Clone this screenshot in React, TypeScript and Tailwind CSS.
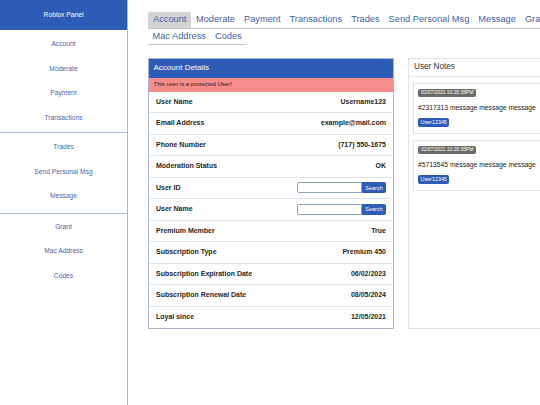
import * as React from "react";

const groups: string[][] = [
  ["Account", "Moderate", "Payment", "Transactions"],
  ["Trades", "Send Personal Msg", "Message"],
  ["Grant", "Mac Address", "Codes"],
];

const tabs = [
  "Account",
  "Moderate",
  "Payment",
  "Transactions",
  "Trades",
  "Send Personal Msg",
  "Message",
  "Grant",
  "Mac Address",
  "Codes",
];

const rows: { label: string; value?: string; search?: boolean }[] = [
  { label: "User Name", value: "Username123" },
  { label: "Email Address", value: "example@mail.com" },
  { label: "Phone Number", value: "(717) 550-1675" },
  { label: "Moderation Status", value: "OK" },
  { label: "User ID", search: true },
  { label: "User Name", search: true },
  { label: "Premium Member", value: "True" },
  { label: "Subscription Type", value: "Premium 450" },
  { label: "Subscription Expiration Date", value: "06/02/2023" },
  { label: "Subscription Renewal Date", value: "08/05/2024" },
  { label: "Loyal since", value: "12/05/2021" },
];

const notes = [
  { date: "02/07/2021 10:20:35PM", text: "#2317313 message message message", user: "User12345" },
  { date: "02/07/2021 10:20:35PM", text: "#5713545 message message message", user: "User12345" },
];

export default function App() {
  return (
    <div className="flex h-[405px] w-[540px] overflow-hidden bg-white font-['Liberation_Sans',Arial,sans-serif]">
      {/* sidebar */}
      <aside className="flex h-full w-[128px] shrink-0 flex-col border-r border-[#a9b8d2] bg-white">
        <div className="flex h-[30px] items-center justify-center bg-[#2e5bb6] text-[6.7px] text-white">
          Roblox Panel
        </div>
        {groups.map((g, i) => (
          <div
            key={i}
            className={
              i === 0
                ? "border-b border-[#a9b8d2] py-[2px]"
                : i === 1
                ? "border-b border-[#a9b8d2] pt-[2px] pb-[4px]"
                : "pt-[1px]"
            }
          >
            {g.map((item) => (
              <div key={item} className="flex h-[24.5px] items-center justify-center text-[6.7px] text-[#4a66ab]">
                {item}
              </div>
            ))}
          </div>
        ))}
      </aside>

      {/* main */}
      <main className="shrink-0 pl-[20px] pt-[12px]">
        <nav className="flex w-[420px] flex-wrap">
          {tabs.map((t, i) => (
            <div
              key={t}
              className={
                i === 0
                  ? "rounded-t-[2px] border-b border-[#c9c9c9] bg-[#d3d3d3] px-[5px] py-[2px] text-[9.25px] leading-[11.5px] text-[#3f5fa6]"
                  : "border-b border-[#c9c9c9] px-[4.5px] py-[2px] text-[9.25px] leading-[11px] text-[#3f5fa6]"
              }
            >
              {t}
            </div>
          ))}
        </nav>

        <div className="mt-[13px] grid grid-cols-[246px_246px] items-start gap-[14px]">
          {/* account details */}
          <section className="border border-[#a9b6cd] bg-white">
            <div className="flex h-[19px] items-center bg-[#2e5bb6] px-[4.5px] text-[8px] text-white">
              Account Details
            </div>
            <div className="flex h-[14px] items-center bg-[#f68d8d] px-[4.5px] text-[6px] text-[#2a1a1a]">
              This user is a protected User!
            </div>
            {rows.map((r, i) => (
              <div
                key={i}
                className={
                  i === rows.length - 1
                    ? "flex h-[21.5px] items-center justify-between px-[7px] text-[7px] font-bold text-[#1f1f1f]"
                    : "flex h-[21.5px] items-center justify-between border-b border-[#dfe5ee] px-[7px] text-[7px] font-bold text-[#1f1f1f]"
                }
              >
                <span>{r.label}</span>
                {r.search ? (
                  <div className="flex h-[11px]">
                    <div className="w-[65px] rounded-l-[2px] border border-[#8ea2c8] bg-white" />
                    <div className="flex w-[24px] items-center justify-center rounded-r-[2px] bg-[#2e5bb6] text-[5.5px] font-normal text-white">
                      Search
                    </div>
                  </div>
                ) : (
                  <span>{r.value}</span>
                )}
              </div>
            ))}
          </section>

          {/* user notes */}
          <section className="self-stretch border border-[#dfe3ea] bg-white">
            <div className="flex h-[18px] items-center border-b border-[#dfe3ea] px-[5px] text-[8.2px] text-[#333]">
              User Notes
            </div>
            <div className="flex flex-col gap-[6px] px-[4px] pt-[6px]">
              {notes.map((n, i) => (
                <div key={i} className="flex flex-col items-start border border-[#e2e5ea] px-[4px] pt-[5.5px] pb-[6px]">
                  <span className="flex h-[8px] items-center rounded-[2px] bg-[#6b6b6b] px-[3px] text-[4.9px] text-white">
                    {n.date}
                  </span>
                  <p className="mt-[5px] text-[6.75px] leading-[12px] text-[#222]">{n.text}</p>
                  <span className="mt-[4px] flex h-[8.6px] items-center rounded-[2px] bg-[#2e5bb6] px-[2.5px] text-[5.4px] text-white">
                    {n.user}
                  </span>
                </div>
              ))}
            </div>
          </section>
        </div>
      </main>
    </div>
  );
}
